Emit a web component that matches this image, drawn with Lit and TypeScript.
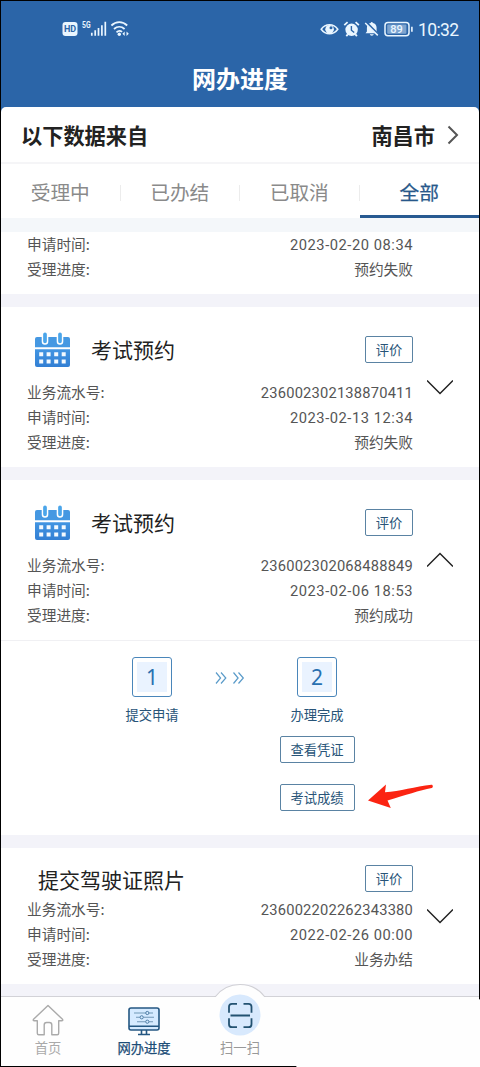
import { LitElement, html, css, svg, nothing } from "lit";
import { customElement, property } from "lit/decorators.js";

interface RecordItem {
  title: string;
  calendar: boolean;
  serial: string;
  time: string;
  status: string;
  open: boolean;
}

const RECORDS: RecordItem[] = [
  { title: "考试预约", calendar: true, serial: "236002302138870411", time: "2023-02-13 12:34", status: "预约失败", open: false },
  { title: "考试预约", calendar: true, serial: "236002302068488849", time: "2023-02-06 18:53", status: "预约成功", open: true },
  { title: "提交驾驶证照片", calendar: false, serial: "236002202262343380", time: "2022-02-26 00:00", status: "业务办结", open: false },
];

const TABS = ["受理中", "已办结", "已取消", "全部"];

@customElement("status-bar")
class StatusBar extends LitElement {
  static styles = css`
    :host { display: flex; align-items: center; justify-content: space-between; height: 20px; padding: 0 20px 0 61px; color: #eaf6ff; }
    .group { display: flex; align-items: center; }
    .left { display: block; }
    .clock { font: 17.5px/20px Roboto, sans-serif; letter-spacing: -0.6px; margin: 2px 0 0 4px; width: 41px; white-space: nowrap; }
    svg { display: block; }
    text { font-family: Roboto, sans-serif; }
  `;
  render() {
    return html`
      <svg class="left" width="68" height="20" viewBox="0 0 68 20" fill="none">
        <rect x="0.5" y="3" width="15" height="14" rx="3" fill="#eaf6ff" />
        <text x="8" y="13.4" font-size="9" font-weight="700" text-anchor="middle" fill="#2b65a8">HD</text>
        <text x="20" y="8.8" font-size="8.5" font-weight="700" textLength="8.5" lengthAdjust="spacingAndGlyphs" fill="#eaf6ff">5G</text>
        <path d="M29.8 16.8v-3M33.2 16.8v-5.5M36.5 16.8V9M39.9 16.8V6.2M43.3 16.8V2.8" stroke="#eaf6ff" stroke-width="1.7" />
        <path d="M49.4 6.5c4.6-4.4 11.2-4.4 15.8 0M52 10c3.2-2.9 7.4-2.9 10.6 0M54.5 13.3c1.6-1.6 4-1.7 5.6-.4" stroke="#eaf6ff" stroke-width="1.8" />
        <circle cx="57.3" cy="15.2" r="1.7" fill="#eaf6ff" />
        <path d="M60.4 14.8l2.300-2.300v4.600zM66.800 14.8l-2.300-2.300v4.600z" fill="#eaf6ff" />
      </svg>
      <div class="group">
        <svg width="94" height="20" viewBox="320 19 94 20" fill="none">
          <path d="M321.2 29.2c4.2-6 12.400-6 16.600 0-4.200 6-12.400 6-16.600 0z" stroke="#eaf6ff" stroke-width="1.5" />
          <circle cx="329.600" cy="29.200" r="4.300" fill="#eaf6ff" />
          <circle cx="331" cy="27.700" r="1.500" fill="#2b65a8" />
          <circle cx="351.600" cy="29.800" r="6.200" fill="#eaf6ff" />
          <path d="M344.300 25.200l3.300-3M358.900 25.200l-3.300-3M347.800 34.400l-1.500 1.800M355.400 34.400l1.500 1.800" stroke="#eaf6ff" stroke-width="1.800" />
          <path d="M351.400 26v4.200l2.800 2.300" stroke="#2b65a8" stroke-width="1.400" />
          <path d="M365.600 33.200l1.300-1.800v-3.600c0-2.600 1.500-4.300 3.700-4.800.3-1.400 2-1.400 2.300 0 2.200.5 3.700 2.200 3.700 4.800v3.600l1.300 1.800zM369.800 34.300h4c-.3 1.800-3.700 1.800-4 0z" fill="#eaf6ff" />
          <path d="M366.400 22.600l12 12.200" stroke="#2b65a8" stroke-width="2.600" />
          <path d="M365.200 23l12.600 12.400" stroke="#eaf6ff" stroke-width="1.500" />
          <rect x="385" y="22.400" width="24" height="13.400" rx="3" stroke="#eaf6ff" stroke-width="1.500" />
          <rect x="387.200" y="24.400" width="19.200" height="9.400" rx="1" fill="#7da4cf" />
          <path d="M411.900 26.800v5" stroke="#eaf6ff" stroke-width="1.600" />
          <text x="396.600" y="33" font-size="11" font-weight="500" text-anchor="middle" fill="#eaf6ff">89</text>
        </svg>
        <span class="clock">10:32</span>
      </div>
    `;
  }
}

@customElement("outline-button")
class OutlineButton extends LitElement {
  static styles = css`
    :host { display: block; box-sizing: border-box; border: 1.5px solid #5a83a3; border-radius: 2px; background: #fff; color: #285478; font-size: 13.3px; line-height: 25px; height: 27px; text-align: center; width: 75px; }
    :host([small]) { width: 48px; }
  `;
  render() {
    return html`<slot></slot>`;
  }
}

@customElement("info-row")
class InfoRow extends LitElement {
  static styles = css`
    :host { display: flex; justify-content: space-between; height: 25px; line-height: 24px; font-size: 14.7px; color: #555; }
    .value { font-family: Roboto, "Noto Sans CJK SC", sans-serif; line-height: 26px; }
    .number { letter-spacing: 0.2px; }
    .date { letter-spacing: 0.54px; }
  `;
  @property() label = "";
  @property() value = "";
  render() {
    const kind = /^\d{4}-/.test(this.value) ? "date" : /^\d/.test(this.value) ? "number" : "";
    return html`<span>${this.label}:</span><span class="value ${kind}">${this.value}</span>`;
  }
}

@customElement("step-flow")
class StepFlow extends LitElement {
  static styles = css`
    :host { display: grid; grid-template-columns: 80px 85px 80px; justify-content: start; padding: 16px 0 0 111px; height: 195px; box-sizing: border-box; border-top: 1px solid #f0f0f3; color: #285478; }
    .step { display: flex; flex-direction: column; align-items: center; }
    .box { box-sizing: border-box; width: 40px; height: 40px; border: 1.5px solid #4a86ba; border-radius: 3px; padding: 4px; }
    .digit { background: #eaf3ff; height: 100%; display: grid; place-items: center; font: 21px/29px "Noto Sans", sans-serif; color: #2870b0; }
    .name { font-size: 13.3px; line-height: 20px; margin: 8px 0 11px; white-space: nowrap; }
    .arrows { margin: 14px 0 0 23px; }
    .gap { margin-top: 21px; }
  `;
  render() {
    return html`
      <div class="step">
        <div class="box"><div class="digit">1</div></div>
        <div class="name">提交申请</div>
      </div>
      <svg class="arrows" width="30" height="14" viewBox="0 0 30 14" fill="none" stroke="#5a9bc9" stroke-width="1.2">
        <path d="M1 1.500l4.600 5.500L1 12.500M6 1.500l4.800 5.500L6 12.500M18.500 1.500l4.600 5.500-4.600 5.500M23.500 1.500l4.800 5.500-4.800 5.500" />
      </svg>
      <div class="step">
        <div class="box"><div class="digit">2</div></div>
        <div class="name">办理完成</div>
        <outline-button>查看凭证</outline-button>
        <outline-button class="gap">考试成绩</outline-button>
      </div>
    `;
  }
}

const calendarIcon = svg`
  <svg width="36" height="36" viewBox="0 0 36 36">
    <defs>
      <linearGradient id="cal" x1="0" y1="0" x2="0" y2="1">
        <stop offset="0" stop-color="#4295e2" /><stop offset="1" stop-color="#327fd4" />
      </linearGradient>
    </defs>
    <path d="M2 5h31q2 0 2 2v8.300H0V7q0-2 2-2z" fill="#4598e2" />
    <path d="M0 17.300h35V33q0 2-2 2H2q-2 0-2-2z" fill="url(#cal)" />
    <path d="M10 3v6.500M25 3v6.500" stroke="#fff" stroke-width="6.600" stroke-linecap="round" />
    <path d="M10 2.300v7M25 2.300v7" stroke="#4aa5ea" stroke-width="3.700" stroke-linecap="round" />
    <path d="M4.200 20.200h4v4h-4zM11.600 20.200h4v4h-4zM19.200 20.200h4v4h-4zM26.700 20.200h4v4h-4zM4.200 27.500h4v4h-4zM11.600 27.500h4v4h-4zM19.200 27.500h4v4h-4zM26.700 27.500h4v4h-4z" fill="#f4faff" />
  </svg>`;

@customElement("record-card")
class RecordCard extends LitElement {
  static styles = css`
    :host { display: block; background: #fff; margin-bottom: 13px; }
    .summary { display: grid; grid-template-columns: 386px 26px; column-gap: 14px; align-items: center; padding: 0 0 12px 26px; }
    .head { display: flex; align-items: center; height: 60px; padding: 13px 0 0 8px; }
    .head.plain { height: 35px; padding: 14px 0 0 11px; }
    .title { flex: 1; font-size: 21px; line-height: 30px; color: #222; margin-top: -2px; }
    .icon { display: flex; margin-right: 20px; width: 36px; }
    .chevron { margin-top: 12px; display: block; }
    outline-button { margin-top: -2px; }
  `;
  @property({ attribute: false }) item!: RecordItem;
  render() {
    const r = this.item;
    return html`
      <div class="summary">
        <div>
          <div class="head ${r.calendar ? "" : "plain"}">
            ${r.calendar ? html`<span class="icon">${calendarIcon}</span>` : nothing}
            <span class="title">${r.title}</span>
            <outline-button small>评价</outline-button>
          </div>
          <info-row label="业务流水号" .value=${r.serial}></info-row>
          <info-row label="申请时间" .value=${r.time}></info-row>
          <info-row label="受理进度" .value=${r.status}></info-row>
        </div>
        <svg class="chevron" width="26" height="16" viewBox="0 0 26 16" fill="none" stroke="#222" stroke-width="1.500">
          <path d=${r.open ? "M0 14.500L13 1.500l13 13" : "M0 1.500l13 13 13-13"} />
        </svg>
      </div>
      ${r.open ? html`<step-flow></step-flow>` : nothing}
    `;
  }
}

@customElement("bottom-nav")
class BottomNav extends LitElement {
  static styles = css`
    :host { display: grid; grid-template-columns: 94px 98px 94px; grid-template-rows: 69px; height: 70px; flex: none; box-sizing: border-box; background: #fefefe; border-top: 1px solid #d2d2d7; position: relative; font-size: 13.3px; color: #999; }
    .bump { position: absolute; left: 213px; top: -14px; }
    .tab { display: flex; flex-direction: column; align-items: center; justify-content: flex-end; gap: 2px; padding-bottom: 8px; box-sizing: border-box; line-height: 20px; position: relative; }
    .active { color: #1c4d77; -webkit-text-stroke: 0.25px #1c4d77; }
    .home { color: #aaa; }
    svg { display: block; flex: none; }
  `;
  render() {
    return html`
      <svg class="bump" width="52" height="16" viewBox="0 0 52 16">
        <path d="M0 13.500h1.500A31 31 0 0 1 50.500 13.500H52V16H0z" fill="#fefefe" />
        <path d="M0 13.500h1.500A31 31 0 0 1 50.500 13.500H52" fill="none" stroke="#d0d0d5" stroke-width="1.200" />
      </svg>
      <div class="tab home">
        <svg width="32" height="32" viewBox="0 0 32 32" fill="none" stroke="#aaa" stroke-width="1.400" stroke-linejoin="round">
          <path d="M16 1.500L1.500 15.300q-.8 1.500.8 1.500h3v12.400q0 1.500 1.500 1.500h5.400v-9.700q0-2.500 2.400-2.500h2.800q2.400 0 2.400 2.500v9.700h5.400q1.500 0 1.500-1.500V16.800h3q1.600 0 .8-1.500z" />
        </svg>
        <span>首页</span>
      </div>
      <div class="tab active">
        <svg width="32" height="30" viewBox="0 0 32 30" fill="none">
          <rect x="1" y="2" width="30" height="22" rx="2" fill="#d5eaff" stroke="#245782" stroke-width="1.600" />
          <path d="M1 20.300h30M13.500 24v4M18.500 24v4M10 28.500h12" stroke="#245782" stroke-width="1.600" />
          <path d="M6 7h11.500M21 7h4M8 11.300h4M15.500 11.300H26M9 15.700h8.500M21 15.700h4" stroke="#7197b6" stroke-width="1.100" />
          <g stroke="#4d7da5" stroke-width="1"><circle cx="19.300" cy="7" r="1.600" /><circle cx="13.700" cy="11.300" r="1.600" /><circle cx="19.300" cy="15.700" r="1.600" /></g>
        </svg>
        <span>网办进度</span>
      </div>
      <div class="tab">
        <svg width="42" height="42" viewBox="0 0 42 42" fill="none">
          <circle cx="21" cy="21" r="20.500" fill="#d8e9fd" />
          <path d="M18 9.800h-5q-3 0-3 3v6M24.500 9.800h5q3 0 3 3v6M18 33.200h-5q-3 0-3-3v-6M24.500 33.200h5q3 0 3-3v-6M11.500 21.500h19.500" stroke="#235271" stroke-width="1.800" />
        </svg>
        <span>扫一扫</span>
      </div>
    `;
  }
}

@customElement("app-root")
class AppRoot extends LitElement {
  static styles = css`
    :host { display: block; width: 480px; height: 1067px; box-sizing: border-box; background: #000; padding: 1px; overflow: hidden; position: relative; font-family: "Noto Sans CJK SC", sans-serif; }
    .screen { display: flex; flex-direction: column; height: 1065px; background: #f3f3f9; }
    .hero { background: #2b65a8; height: 106px; flex: none; padding-top: 18px; box-sizing: border-box; }
    .page-title { margin: 0; padding-top: 21px; text-align: center; color: #fff; font-size: 24px; line-height: 36px; font-weight: 700; }
    .source-wrap { background: #2b65a8; flex: none; }
    .source { display: flex; align-items: center; box-sizing: border-box; height: 57px; padding: 0 20px 0 20px; background: #fff; border-radius: 5px 5px 0 0; border-bottom: 2px solid #f5f5f7; font-size: 21.2px; font-weight: 700; color: #222; }
    .city { margin-left: auto; margin-right: 12px; }
    .tabs { display: grid; grid-template-columns: repeat(4, 1fr); height: 54px; flex: none; background: #fff; font-size: 19.700px; color: #8a8a8a; }
    .tab { display: flex; align-items: center; justify-content: center; padding: 4px 1px 0 0; box-sizing: border-box; border-bottom: 3px solid transparent; position: relative; }
    .tab:not(:last-child)::after { content: ""; position: absolute; right: 0; top: 21px; height: 16px; width: 1px; background: #ececec; }
    .tab.current { color: #28588a; border-bottom-color: #285a91; -webkit-text-stroke: 0.25px #28588a; padding-right: 0; }
    .spacer { height: 14px; background: #f4f7fa; flex: none; }
    .partial { background: #fff; padding: 0 66px 12px 26px; margin-bottom: 13px; height: 62px; box-sizing: border-box; flex: none; }
    record-card { flex: none; }
    record-card:last-of-type { margin-bottom: 12px; }
    .pointer { position: absolute; left: 366px; top: 782px; }
    .corner { position: absolute; right: 0; bottom: 0; }
  `;
  render() {
    return html`
      <div class="screen">
        <header class="hero">
          <status-bar></status-bar>
          <h1 class="page-title">网办进度</h1>
        </header>
        <div class="source-wrap">
          <div class="source">
            <span>以下数据来自</span><span class="city">南昌市</span>
            <svg width="12" height="20" viewBox="0 0 12 20" fill="none" stroke="#555" stroke-width="2"><path d="M1.500 1.500L10 10l-8.500 8.500" /></svg>
          </div>
        </div>
        <nav class="tabs">
          ${TABS.map((t) => html`<div class="tab ${t === "全部" ? "current" : ""}">${t}</div>`)}
        </nav>
        <div class="spacer"></div>
        <section class="partial">
          <info-row label="申请时间" value="2023-02-20 08:34"></info-row>
          <info-row label="受理进度" value="预约失败"></info-row>
        </section>
        ${RECORDS.map((r) => html`<record-card .item=${r}></record-card>`)}
        <bottom-nav></bottom-nav>
      </div>
      <svg class="pointer" width="70" height="28" viewBox="0 0 70 28">
        <path d="M2 18.500L20 2.500l-1 7.700C34 9.500 49 4.500 65.500 2.800c1.700 0 1.800 2.700.3 3.200C53 8.500 40 13 21.500 18.500l3.300 7.500z" fill="#fb2412" />
      </svg>
      <svg class="corner" width="184" height="72" viewBox="0 0 184 72">
        <path d="M184 4q-4 2-5 8v54H12q-9 0-12 6h184z" fill="#fefefe" />
      </svg>
    `;
  }
}
